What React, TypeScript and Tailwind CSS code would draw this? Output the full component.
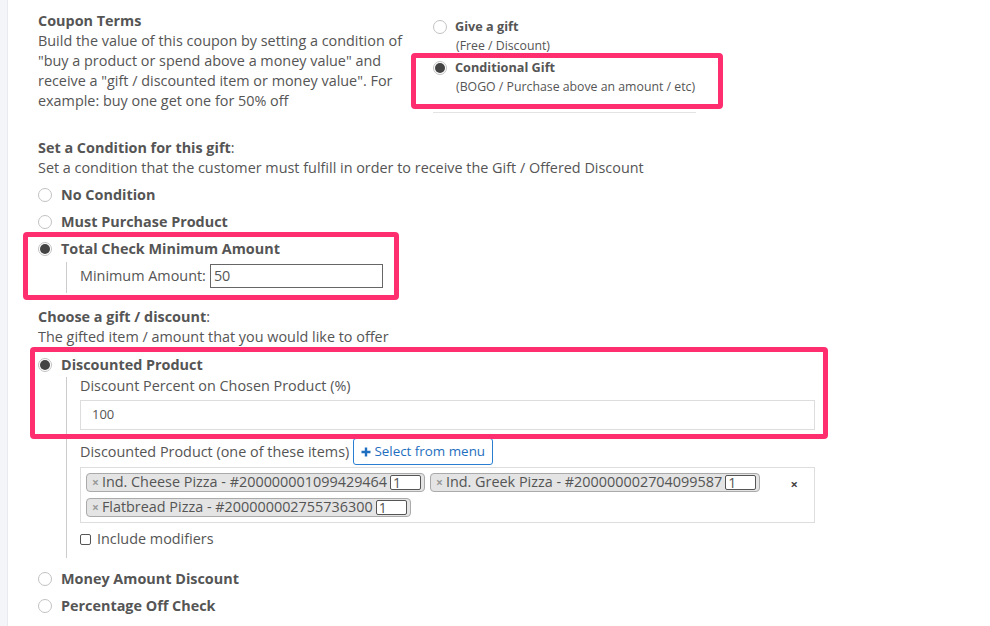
import React from 'react';

const Radio: React.FC<{ checked?: boolean }> = ({ checked }) => (
  <span className="w-[14px] h-[14px] rounded-full border border-[#c2c2c2] bg-white flex items-center justify-center shrink-0">
    {checked && <span className="w-[10px] h-[10px] rounded-full bg-[#444]" />}
  </span>
);

const RadioRow: React.FC<{ label: string; checked?: boolean }> = ({ label, checked }) => (
  <div className="h-[27px] flex items-center gap-[9px]">
    <Radio checked={checked} />
    <span className="text-[14.4px] font-bold text-[#555]">{label}</span>
  </div>
);

const Tag: React.FC<{ name: string }> = ({ name }) => (
  <span className="h-[19px] flex items-center bg-[#e4e4e4] border border-[#aaa] rounded-[4px] pl-[5px] pr-[3px] text-[14.4px] text-[#555] leading-none">
    <span className="text-[12px] font-bold text-[#999] mr-[3px]">×</span>
    {name}
    <span className="ml-[3px] w-[31px] h-[15px] bg-white border border-[#555] rounded-[2px] text-[14px] leading-[13px] pl-[2px]">1</span>
  </span>
);

const Highlight: React.FC<{ className: string }> = ({ className }) => (
  <div className={`absolute border-[5px] border-[#ff2e6e] rounded-[4px] pointer-events-none ${className}`} />
);

export default function App() {
  return (
    <div className="relative flex min-h-screen bg-white text-[#555]" style={{ fontFamily: '"Open Sans", "Liberation Sans", sans-serif' }}>
      <div className="w-[8px] shrink-0 bg-[#f4f5f9] border-r border-[#e9eaef]" />
      <div className="pl-[30px] pt-[11px] flex-1">
        <div className="flex">
          <div className="w-[372px] text-[14.4px] leading-[20px]">
            <div className="font-bold">Coupon Terms</div>
            <p>
              Build the value of this coupon by setting a condition of "buy a product or spend above a money value" and receive a "gift / discounted item or money value". For example: buy one get one for 50% off
            </p>
          </div>
          <div className="ml-[23px] pt-[6px] w-[263px] whitespace-nowrap">
            <div className="flex items-center gap-[8px] h-[20px]">
              <Radio />
              <span className="text-[12.7px] font-bold">Give a gift</span>
            </div>
            <div className="pl-[23px] text-[12.3px] leading-[16px] mt-[1px]">(Free / Discount)</div>
            <div className="flex items-center gap-[8px] h-[20px] mt-[4px]">
              <Radio checked />
              <span className="text-[12.7px] font-bold">Conditional Gift</span>
            </div>
            <div className="pl-[23px] text-[12.3px] leading-[16px] mt-[1px]">(BOGO / Purchase above an amount / etc)</div>
            <div className="h-px bg-[#e3e3e3] mt-[17px]" />
          </div>
        </div>

        <div className="mt-[25px] text-[14.4px] leading-[20px]">
          <div><span className="font-bold">Set a Condition for this gift</span>:</div>
          <div>Set a condition that the customer must fulfill in order to receive the Gift / Offered Discount</div>
        </div>

        <div className="mt-[3px]">
          <RadioRow label="No Condition" />
          <RadioRow label="Must Purchase Product" />
          <RadioRow label="Total Check Minimum Amount" checked />
          <div className="ml-[28px] border-l border-[#ccc] pl-[13px] pt-[2px] pb-[5px]">
            <div className="flex items-center gap-[4px] text-[14.4px]">
              <span>Minimum Amount:</span>
              <div className="w-[173px] h-[24px] border border-[#666] flex items-center pl-[3px] text-[14.4px]">50</div>
            </div>
          </div>
        </div>

        <div className="mt-[14px] text-[14.4px] leading-[20px]">
          <div><span className="font-bold">Choose a gift / discount</span>:</div>
          <div>The gifted item / amount that you would like to offer</div>
        </div>

        <div className="mt-[6px]">
          <div className="h-[24px] flex items-center gap-[9px]">
            <Radio checked />
            <span className="text-[14.4px] font-bold">Discounted Product</span>
          </div>
          <div className="ml-[28px] border-l border-[#ccc] pl-[13px] pb-[9px] w-[749px]">
            <div className="text-[14.4px] leading-[18px]">Discount Percent on Chosen Product (%)</div>
            <div className="mt-[5px] h-[30px] border border-[#ddd] flex items-center pl-[11px] text-[13px]">100</div>
            <div className="mt-[8px] flex items-center gap-[4px]">
              <span className="text-[14.4px]">Discounted Product (one of these items)</span>
              <button className="h-[27px] w-[140px] border border-[#2a7ed2] rounded-[3px] text-[#1f6fc0] text-[13.4px] flex items-center justify-center gap-[3px] bg-white">
                <svg width="10" height="10" viewBox="0 0 10 10"><path d="M5 0.5v9M0.5 5h9" stroke="#1f6fc0" strokeWidth="2.4" /></svg>
                Select from menu
              </button>
            </div>
            <div className="mt-[2px] h-[56px] border border-[#ddd] pl-[5px] pt-[5px] pr-[16px] flex items-start">
              <div className="flex flex-wrap gap-x-[5px] gap-y-[6px] flex-1">
                <Tag name="Ind. Cheese Pizza - #200000001099429464" />
                <Tag name="Ind. Greek Pizza - #200000002704099587" />
                <Tag name="Flatbread Pizza - #200000002755736300" />
              </div>
              <span className="text-[13px] font-bold text-[#444] mt-[2px]">×</span>
            </div>
            <div className="mt-[6px] h-[20px] flex items-center gap-[6px] text-[14.4px]">
              <span className="w-[11px] h-[11px] border border-[#555] rounded-[2px] bg-white" />
              <span>Include modifiers</span>
            </div>
          </div>
          <div className="mt-[7px]">
            <RadioRow label="Money Amount Discount" />
            <RadioRow label="Percentage Off Check" />
          </div>
        </div>
      </div>

      <Highlight className="left-[411px] top-[53px] w-[312px] h-[56px]" />
      <Highlight className="left-[23px] top-[232px] w-[376px] h-[68px]" />
      <Highlight className="left-[30px] top-[347px] w-[798px] h-[92px]" />
    </div>
  );
}
